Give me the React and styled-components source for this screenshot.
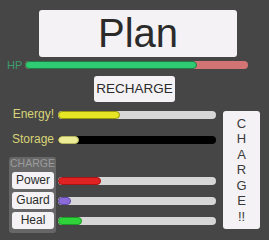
import React from "react";
import styled, { createGlobalStyle } from "styled-components";

const GlobalStyle = createGlobalStyle`
  html, body {
    margin: 0;
    padding: 0;
    background: #464646;
  }
  body {
    font-family: "Liberation Sans", Arial, sans-serif;
  }
`;

const Screen = styled.div`
  width: 269px;
  height: 240px;
  box-sizing: border-box;
  padding-top: 10px;
  display: flex;
  flex-direction: column;
  background: #464646;
  overflow: hidden;
`;

const Header = styled.div`
  padding-left: 39px;
  display: flex;
`;

const PlanButton = styled.div`
  width: 198px;
  height: 47px;
  background: #f4f2f4;
  border-radius: 3px;
  color: #2b2b2b;
  font-size: 40px;
  line-height: 47px;
  text-align: center;
`;

const HpRow = styled.div`
  margin-top: 3px;
  height: 10px;
  padding: 0 21px 0 7px;
  display: flex;
  align-items: center;
  gap: 2px;
`;

const HpLabel = styled.span`
  color: #3f9d70;
  font-size: 11px;
  line-height: 10px;
  width: 16px;
`;

const Track = styled.div`
  flex: ${(p) => (p.$width ? "none" : "1")};
  width: ${(p) => (p.$width ? `${p.$width}px` : "auto")};
  height: 8px;
  border-radius: 4px;
  background: ${(p) => p.$bg};
  position: relative;
  overflow: hidden;
`;

const Fill = styled.div`
  height: 100%;
  box-sizing: border-box;
  border-radius: 4px;
  background: ${(p) => p.$color};
  border: 1px solid ${(p) => p.$edge};
`;

const RechargeRow = styled.div`
  margin-top: 6px;
  display: flex;
  justify-content: center;
`;

const RechargeButton = styled.div`
  width: 81px;
  height: 26px;
  background: #f4f2f4;
  border-radius: 3px;
  color: #2b2b2b;
  font-size: 13.5px;
  line-height: 26px;
  text-align: center;
`;

const Lower = styled.div`
  margin-top: 5px;
  display: flex;
  gap: 7px;
`;

const LeftCol = styled.div`
  width: 216px;
  box-sizing: border-box;
  padding-left: 9px;
  display: flex;
  flex-direction: column;
  gap: 10px;
`;

const StatRow = styled.div`
  height: 15px;
  display: flex;
  align-items: center;
  gap: 4px;
`;

const StatLabel = styled.span`
  width: 45px;
  text-align: right;
  color: #d8d477;
  font-size: 12px;
  line-height: 15px;
  white-space: nowrap;
`;

const ChargeBlock = styled.div`
  display: flex;
  gap: 2px;
`;

const Panel = styled.div`
  width: 47px;
  height: 76px;
  box-sizing: border-box;
  padding: 0 2px 0 3px;
  background: #676767;
  border-radius: 3px;
  display: flex;
  flex-direction: column;
  gap: 3px;
`;

const PanelTitle = styled.div`
  height: 12px;
  color: #9c9c9c;
  font-size: 10.5px;
  line-height: 13px;
  text-align: center;
  margin-left: -2px;
`;

const SmallButton = styled.div`
  height: 17px;
  background: #f4f2f4;
  border-radius: 3px;
  color: #2b2b2b;
  font-size: 12px;
  line-height: 17px;
  text-align: center;
`;

const BarsCol = styled.div`
  padding-top: 15px;
  display: flex;
  flex-direction: column;
  gap: 3px;
`;

const BarSlot = styled.div`
  height: 17px;
  display: flex;
  align-items: center;
`;

const ChargeButton = styled.div`
  margin-top: 4px;
  width: 37px;
  height: 118px;
  background: #f4f2f4;
  border-radius: 3px;
  color: #3a3a3a;
  font-size: 13px;
  line-height: 15.4px;
  display: flex;
  flex-direction: column;
  align-items: center;
  justify-content: center;
`;

const Bar = ({ width, bg, value, color, edge }) => (
  <Track $width={width} $bg={bg}>
    <Fill $color={color} $edge={edge} style={{ width: `${value}%` }} />
  </Track>
);

const charges = [
  { name: "Power", value: 27, color: "#e02222", edge: "#a51515" },
  { name: "Guard", value: 8, color: "#8a6bd8", edge: "#5f48a8" },
  { name: "Heal", value: 15, color: "#2fd43a", edge: "#1b9a24" },
];

export default function App() {
  return (
    <>
      <GlobalStyle />
      <Screen>
        <Header>
          <PlanButton>Plan</PlanButton>
        </Header>
        <HpRow>
          <HpLabel>HP</HpLabel>
          <Bar bg="#d27474" value={77} color="#2fcb72" edge="#1f7a47" />
        </HpRow>
        <RechargeRow>
          <RechargeButton>RECHARGE</RechargeButton>
        </RechargeRow>
        <Lower>
          <LeftCol>
            <StatRow>
              <StatLabel>Energy!</StatLabel>
              <Bar width={158} bg="#d6d6d6" value={39} color="#e6e626" edge="#9a9a10" />
            </StatRow>
            <StatRow>
              <StatLabel>Storage</StatLabel>
              <Bar width={158} bg="#000000" value={13} color="#ecec96" edge="#b5b560" />
            </StatRow>
            <ChargeBlock>
              <Panel>
                <PanelTitle>CHARGE</PanelTitle>
                {charges.map((c) => (
                  <SmallButton key={c.name}>{c.name}</SmallButton>
                ))}
              </Panel>
              <BarsCol>
                {charges.map((c) => (
                  <BarSlot key={c.name}>
                    <Bar width={158} bg="#d6d6d6" value={c.value} color={c.color} edge={c.edge} />
                  </BarSlot>
                ))}
              </BarsCol>
            </ChargeBlock>
          </LeftCol>
          <ChargeButton>
            {["C", "H", "A", "R", "G", "E", "!!"].map((ch, i) => (
              <span key={i}>{ch}</span>
            ))}
          </ChargeButton>
        </Lower>
      </Screen>
    </>
  );
}
